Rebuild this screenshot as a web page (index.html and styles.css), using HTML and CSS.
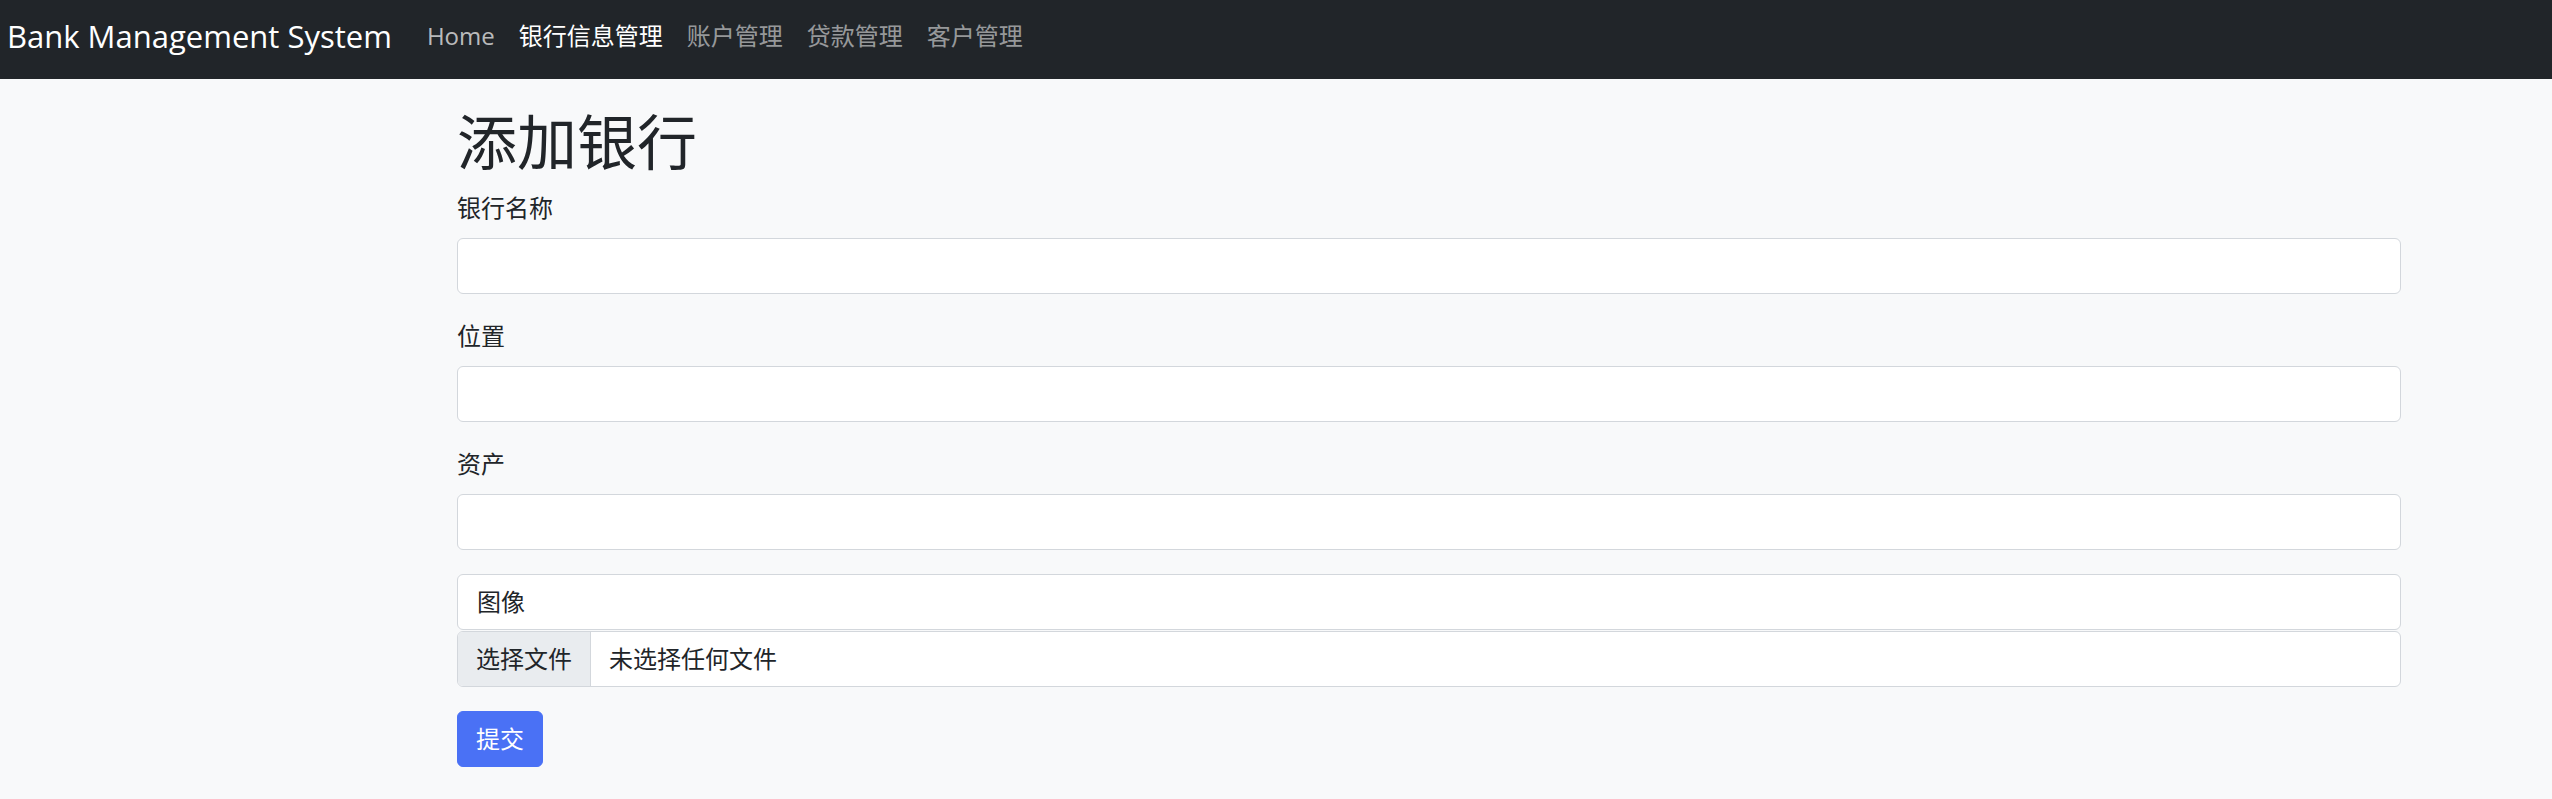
FILE: index.html
```html
<!DOCTYPE html>
<html lang="zh-CN">
<head>
<meta charset="utf-8">
<title>Bank Management System</title>
<link rel="stylesheet" href="styles.css">
</head>
<body>
<nav class="navbar">
  <a class="brand" href="#">Bank Management System</a>
  <ul class="nav-links">
    <li><a class="nav-link home" href="#">Home</a></li>
    <li><a class="nav-link active" href="#">银行信息管理</a></li>
    <li><a class="nav-link" href="#">账户管理</a></li>
    <li><a class="nav-link" href="#">贷款管理</a></li>
    <li><a class="nav-link" href="#">客户管理</a></li>
  </ul>
</nav>
<main class="container">
  <h1 class="title">添加银行</h1>
  <form class="form">
    <div class="field">
      <label class="label">银行名称</label>
      <div class="control"></div>
    </div>
    <div class="field">
      <label class="label">位置</label>
      <div class="control"></div>
    </div>
    <div class="field">
      <label class="label">资产</label>
      <div class="control"></div>
    </div>
    <div class="field">
      <div class="control text-box">图像</div>
      <div class="file-input">
        <span class="file-btn">选择文件</span>
        <span class="file-name">未选择任何文件</span>
      </div>
    </div>
    <button class="submit" type="button">提交</button>
  </form>
</main>
</body>
</html>
```
FILE: styles.css
```css
* { box-sizing: border-box; }
html, body { margin: 0; padding: 0; }
body {
  background: #f8f9fa;
  color: #212529;
  font-family: "Open Sans", "Noto Sans CJK SC", sans-serif;
  font-size: 24px;
  line-height: 36px;
  min-height: 799px;
}
.navbar {
  display: flex;
  align-items: center;
  height: 79px;
  background: #212529;
  padding-left: 7px;
  padding-bottom: 7px;
}
.brand {
  color: #fff;
  text-decoration: none;
  font-size: 31px;
  line-height: 42px;
  margin-right: 23px;
}
.nav-links {
  display: flex;
  list-style: none;
  margin: 0;
  padding: 0;
}
.nav-link {
  display: block;
  text-decoration: none;
  font-size: 24px;
  line-height: 36px;
  padding: 0 12px;
  color: rgba(255, 255, 255, 0.55);
}
.nav-link.home { color: rgba(255, 255, 255, 0.7); }
.nav-link.active { color: #fff; }
.container {
  margin-left: 457px;
  width: 1944px;
  padding-top: 27px;
}
.title {
  font-size: 60px;
  line-height: 72px;
  font-weight: 400;
  margin: 0 0 12px;
}
.form { margin: 0; }
.field { margin-bottom: 24px; }
.label {
  display: block;
  margin-bottom: 12px;
}
.control {
  height: 56px;
  background: #fff;
  border: 1px solid #d3d7dc;
  border-radius: 6px;
}
.text-box {
  padding: 9px 19px;
}
.file-input {
  display: flex;
  height: 56px;
  margin-top: 1px;
  background: #fff;
  border: 1px solid #d3d7dc;
  border-radius: 6px;
  overflow: hidden;
}
.file-btn {
  background: #e9ecef;
  padding: 9px 18px;
  border-right: 1px solid #d3d7dc;
}
.file-name {
  padding: 9px 18px;
}
.submit {
  font-family: inherit;
  font-size: 24px;
  line-height: 36px;
  color: #fff;
  background: #4a71f5;
  border: 1px solid #4a71f5;
  border-radius: 6px;
  padding: 9px 18px;
  height: 56px;
  cursor: pointer;
}
```
